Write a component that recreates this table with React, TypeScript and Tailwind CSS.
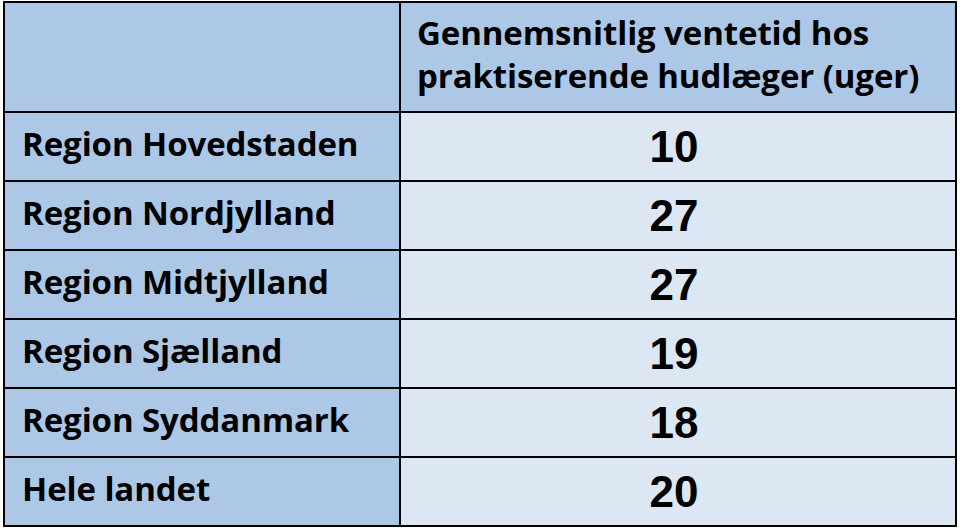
const rows = [
  { region: 'Region Hovedstaden', weeks: 10 },
  { region: 'Region Nordjylland', weeks: 27 },
  { region: 'Region Midtjylland', weeks: 27 },
  { region: 'Region Sjælland', weeks: 19 },
  { region: 'Region Syddanmark', weeks: 18 },
  { region: 'Hele landet', weeks: 20 },
];

export default function App() {
  return (
    <div className="w-[960px] h-[528px] bg-white pl-[3px] pt-px">
      <div className="w-[954px] border-2 border-black font-['Open_Sans',sans-serif] text-black">
        {/* Header */}
        <div className="grid grid-cols-[396px_1fr] h-[108px]">
          <div className="bg-[#adc8e6] border-r-2 border-black" />
          <div className="bg-[#adc8e6] pl-[16px] pt-[8px] text-[33px] font-bold leading-[43px] tracking-[-0.1px]">
            Gennemsnitlig ventetid hos
            <br />
            praktiserende hudlæger (uger)
          </div>
        </div>

        {/* Rows */}
        {rows.map((r) => (
          <div key={r.region} className="grid grid-cols-[396px_1fr] h-[69px] border-t-2 border-black">
            <div className="bg-[#adc8e6] border-r-2 border-black flex items-center pl-[17px] pb-[6px] text-[33px] font-bold tracking-[-0.1px]">
              {r.region}
            </div>
            <div className="bg-[#dce7f3] flex items-center justify-center pr-[8px] font-['Liberation_Sans',sans-serif] text-[44px] font-bold">
              {r.weeks}
            </div>
          </div>
        ))}
      </div>
    </div>
  );
}
